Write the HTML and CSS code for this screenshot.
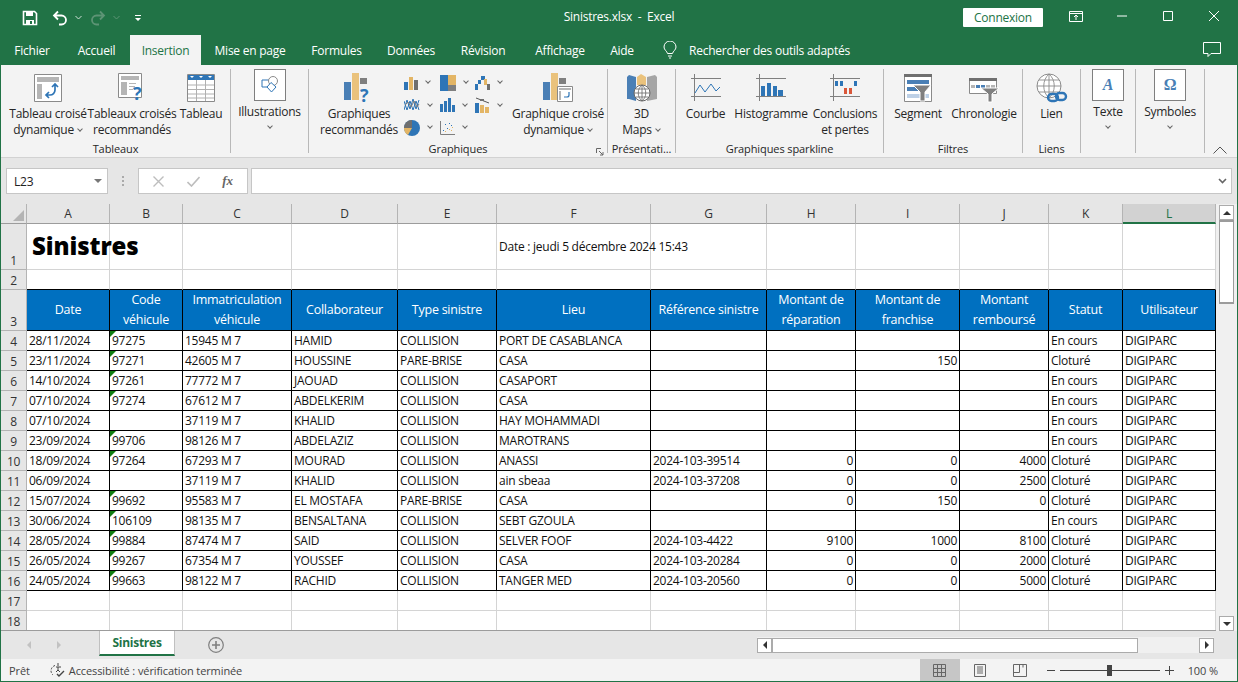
FILE: index.html
```html
<!DOCTYPE html>
<html lang="fr">
  <head>
    <meta charset="UTF-8" />
    <title>Sinistres.xlsx - Excel</title>
    <link rel="stylesheet" href="styles.css">
  </head>

  <body>
    <div class="window">
      <!-- barre de titre -->
      <div class="titlebar">
        <div class="qat">
          <svg class="q-save" width="16" height="16" viewBox="0 0 16 16"><path d="M1.5 1.5h11l2 2v11h-13z" fill="none" stroke="#fff" stroke-width="1.6"/><path d="M4 1.5h7v4.5H4zM4 10h8v5H4z" fill="#fff"/><path d="M8 11h2v3H8z" fill="#217346"/></svg>
          <svg class="q-undo" width="16" height="16" viewBox="0 0 16 16"><path d="M6 1.5 2 5.5l4 4M2.5 5.5h7a4 4 0 0 1 0 9H7" fill="none" stroke="#fff" stroke-width="1.8"/></svg>
          <svg class="q-chev" width="7" height="5" viewBox="0 0 7 5"><path d="M.5 1 3.5 4l3-3" fill="none" stroke="#cfe0d6"/></svg>
          <svg class="q-redo" width="16" height="16" viewBox="0 0 16 16"><path d="M10 1.5l4 4-4 4M13.5 5.5h-7a4 4 0 0 0 0 9H9" fill="none" stroke="#5d9475" stroke-width="1.8"/></svg>
          <svg class="q-chev2" width="7" height="5" viewBox="0 0 7 5"><path d="M.5 1 3.5 4l3-3" fill="none" stroke="#5d9475"/></svg>
          <svg class="q-more" width="8" height="8" viewBox="0 0 8 8"><path d="M1 1h6v1H1zM1 4h6L4 7z" fill="#fff"/></svg>
        </div>
        <div class="doc-title">Sinistres.xlsx&nbsp; - &nbsp;Excel</div>
        <div class="win-ctrl">
          <button class="connexion">Connexion</button>
          <svg class="w-ribbon" width="14" height="11" viewBox="0 0 14 11"><path d="M.5.5h13v10H.5zM.5 2.5h13M7 9V4M5 6l2-2 2 2" fill="none" stroke="#fff"/></svg>
          <svg class="w-min" width="10" height="10" viewBox="0 0 10 10"><path d="M0 5h10" stroke="#fff"/></svg>
          <svg class="w-max" width="10" height="10" viewBox="0 0 10 10"><path d="M.5.5h9v9h-9z" fill="none" stroke="#fff"/></svg>
          <svg class="w-close" width="10" height="10" viewBox="0 0 10 10"><path d="M0 0l10 10M10 0 0 10" stroke="#fff"/></svg>
        </div>
      </div>

      <!-- onglets -->
      <div class="tabs">
        <a class="tab t-fichier">Fichier</a>
        <a class="tab t-accueil">Accueil</a>
        <a class="tab t-insertion active">Insertion</a>
        <a class="tab t-mise">Mise en page</a>
        <a class="tab t-formules">Formules</a>
        <a class="tab t-donnees">Données</a>
        <a class="tab t-revision">Révision</a>
        <a class="tab t-affichage">Affichage</a>
        <a class="tab t-aide">Aide</a>
        <svg class="bulb" width="14" height="18" viewBox="0 0 14 18"><path d="M4.5 12.5C4 10 1 9 1 6a6 6 0 0 1 12 0c0 3-3 4-3.500 6.500zM5 15h4M6 17h2" fill="none" stroke="#fff"/></svg>
        <span class="search">Rechercher des outils adaptés</span>
        <svg class="comment" width="18" height="16" viewBox="0 0 18 16"><path d="M.5.500h17v11H8l-3 3v-3H.5z" fill="none" stroke="#fff"/></svg>
      </div>

      <!-- ruban -->
      <div class="ribbon">
        <div class="group g-tableaux">
          <div class="items">
            <div class="btn w-pivot">
              <svg width="28" height="28" viewBox="0 0 28 28"><path d="M.5.5h27v27H.5z" fill="#fff" stroke="#8a8a8a"/><path d="M3 3h22v5H3zM3 10h5v15H3z" fill="#b5b5b5"/><path d="M21 10v6a5 5 0 0 1-5 5h-4M18 13l3-3 3 3M15 18l-3 3 3 3" fill="none" stroke="#2e75b6" stroke-width="1.700"/></svg>
              <span>Tableau croisé</span><span>dynamique <i class="ch"></i></span>
            </div>
            <div class="btn w-reco">
              <svg width="28" height="30" viewBox="0 0 28 30"><path d="M.5.5h23v24H.5z" fill="#fff" stroke="#8a8a8a"/><path d="M3 3h18v4H3zM3 9h6v13H3zM11 10h7v1h-7zM11 13h6v1h-6zM11 16h4v1h-4z" fill="#b5b5b5"/><text x="15" y="27" class="qm">?</text></svg>
              <span>Tableaux croisés</span><span>recommandés</span>
            </div>
            <div class="btn w-table">
              <svg width="28" height="28" viewBox="0 0 28 28"><path d="M.5.5h27v27H.5z" fill="#fff" stroke="#8a8a8a"/><path d="M1 1h26v5H1z" fill="#2e75b6"/><path d="M1 11h26M1 15.500h26M1 20h26M1 24h26M9.500 6v21M18.500 6v21" stroke="#b0b0b0"/><path d="M3 2h4L5 4zM12 2h4l-2 2zM21 2h4l-2 2z" fill="#fff"/></svg>
              <span>Tableau</span>
            </div>
          </div>
          <div class="group-label">Tableaux</div>
        </div>

        <div class="group g-illus">
          <div class="items">
            <div class="btn boxed">
              <div class="box"><svg width="18" height="18" viewBox="0 0 18 18"><path d="M1 4h8v7H1z" fill="none" stroke="#2e75b6"/><circle cx="12" cy="5" r="4.500" fill="#fff" stroke="#8a8a8a"/><path d="M10 6.500 15 11l-4.500 5L6 11z" fill="#fff" stroke="#2e75b6"/></svg></div>
              <span>Illustrations</span><i class="ch alone"></i>
            </div>
          </div>
        </div>

        <div class="group g-graph">
          <div class="items">
            <div class="btn w-greco">
              <svg width="30" height="30" viewBox="0 0 30 30"><path d="M0 9h7v18H0z" fill="#4a7fb5"/><path d="M8 0h7v27H8z" fill="#eac27c"/><path d="M16 5h7v6h-7z" fill="#7f7f7f"/><text x="16" y="29" class="qm">?</text></svg>
              <span>Graphiques</span><span>recommandés</span>
            </div>
            <div class="mini-grid">
              <div class="mini"><svg width="14" height="14" viewBox="0 0 14 14"><path d="M0 6h4v8H0z" fill="#2e75b6"/><path d="M5 1h4v13H5z" fill="#e3b565"/><path d="M10 4h4v10h-4z" fill="#6f6f6f"/></svg><i class="ch"></i></div>
              <div class="mini"><svg width="16" height="16" viewBox="0 0 16 16"><path d="M0 0h8v10H0z" fill="#2e75b6"/><path d="M0 10h8v6H0z" fill="#2e75b6"/><path d="M8 0h8v10H8z" fill="#e3b565"/><path d="M8 10h8v6H8z" fill="#7f7f7f"/></svg><i class="ch"></i></div>
              <div class="mini"><svg width="15" height="15" viewBox="0 0 15 15"><path d="M0 9h3v6H0zM3 5h3v4H3z" fill="#2e75b6"/><path d="M6 1h4v4H6z" fill="#2e75b6"/><path d="M9 4h3v6H9z" fill="#e3b565"/><path d="M12 9h3v6h-3z" fill="#6f6f6f"/></svg><i class="ch"></i></div>
              <div class="mini"><svg width="16" height="14" viewBox="0 0 16 14"><path d="M0 12 3 2l3 9 3-10 3 10 3-9M0 3l3 9 3-9 3 9 3-9 3 9" fill="none" stroke="#2e75b6"/><path d="M1 7l3-3 3 5 3-6 3 6 2-3" fill="none" stroke="#7f7f7f"/></svg><i class="ch"></i></div>
              <div class="mini"><svg width="15" height="14" viewBox="0 0 15 14"><path d="M0 6h3v8H0zM4 3h3v11H4zM8 0h3v14H8zM12 7h3v7h-3z" fill="#2e75b6"/></svg><i class="ch"></i></div>
              <div class="mini"><svg width="15" height="16" viewBox="0 0 15 16"><path d="M0 6h4v10H0z" fill="#2e75b6"/><path d="M5 8h4v8H5z" fill="#e3b565"/><path d="M10 10h4v6h-4z" fill="#e3b565"/><path d="M1 1 14 6" stroke="#555"/><path d="M5 2h4v2H5z" fill="#6f6f6f"/></svg><i class="ch"></i></div>
              <div class="mini"><svg width="16" height="16" viewBox="0 0 16 16"><circle cx="8" cy="8" r="8" fill="#2e75b6"/><path d="M8 8V0A8 8 0 0 0 0 8z" fill="#6f6f6f"/><path d="M8 8H0a8 8 0 0 0 4 7z" fill="#e3b565"/></svg><i class="ch"></i></div>
              <div class="mini"><svg width="15" height="14" viewBox="0 0 15 14"><path d="M.5 0v13.500H15" fill="none" stroke="#7f7f7f"/><path d="M3 9h1v1H3zM5 3h1v1H5zM7 7h1v1H7zM11 4h1v1h-1zM9 2h1v1H9z" fill="#2e75b6"/><path d="M5 10h1v1H5zM9 8h1v1H9zM12 6h1v1h-1zM11 9h1v1h-1z" fill="#e3b565"/></svg><i class="ch"></i></div>
            </div>
            <div class="btn w-gcroise">
              <svg width="30" height="30" viewBox="0 0 30 30"><path d="M0 9h7v18H0z" fill="#4a7fb5"/><path d="M8 0h7v27H8z" fill="#eac27c"/><path d="M16 5h7v6h-7z" fill="#7f7f7f"/><path d="M14.500 13.500h15v15h-15z" fill="#fff" stroke="#8a8a8a"/><path d="M16 15h12v2H16zM16 18h2v9h-2z" fill="#b5b5b5"/><path d="M26 19v3a2 2 0 0 1-2 2h-3" fill="none" stroke="#2e75b6" stroke-width="1.200"/></svg>
              <span>Graphique croisé</span><span>dynamique <i class="ch"></i></span>
            </div>
          </div>
          <div class="group-label">Graphiques</div>
          <svg class="launcher" width="8" height="8" viewBox="0 0 8 8"><path d="M.5 5V.5H5M3 3l4 4M4 7h3V4" fill="none" stroke="#666"/></svg>
        </div>

        <div class="group g-pres">
          <div class="items">
            <div class="btn w-maps">
              <svg width="30" height="30" viewBox="0 0 30 30"><path d="M0 4l2-2 7 2v24l-7-2-2 0z" fill="#4a7fb5"/><path d="M10 4l4-3 5 3v8h-9z" fill="#eac27c"/><path d="M20 4l8-2 2 2v22l-10 2z" fill="#a5a5a5"/><circle cx="15" cy="20" r="8" fill="#fff" stroke="#666"/><path d="M7 20h16M15 12v16M9 16h12M9 24h12M15 12c-5 4-5 12 0 16M15 12c5 4 5 12 0 16" fill="none" stroke="#666" stroke-width=".8"/></svg>
              <span>3D</span><span>Maps <i class="ch"></i></span>
            </div>
          </div>
          <div class="group-label">Présentati...</div>
        </div>

        <div class="group g-spark">
          <div class="items">
            <div class="btn w-courbe">
              <svg width="30" height="28" viewBox="0 0 30 28"><path d="M0 4.500h30M0 22.500h30M3.500 0v27" stroke="#7f7f7f"/><path d="M4 19l5-8 5 7 6-8 5 7 4-4" fill="none" stroke="#2e75b6"/></svg>
              <span>Courbe</span>
            </div>
            <div class="btn w-histo">
              <svg width="30" height="28" viewBox="0 0 30 28"><path d="M0 4.500h30M0 22.500h30M3.500 0v27" stroke="#7f7f7f"/><path d="M5 12h4v10H5zM11 9h4v13h-4zM17 12h4v10h-4zM22 16h5v6h-5z" fill="#2e75b6"/></svg>
              <span>Histogramme</span>
            </div>
            <div class="btn w-concl">
              <svg width="30" height="28" viewBox="0 0 30 28"><path d="M0 4.500h30M0 22.500h30M3.500 0v27" stroke="#7f7f7f"/><path d="M5 7h3v5H5zM10 7h3v5h-3zM24 7h3v5h-3z" fill="#2e75b6"/><path d="M14 14h3v6h-3zM19 14h3v6h-3z" fill="#d9573a"/></svg>
              <span>Conclusions</span><span>et pertes</span>
            </div>
          </div>
          <div class="group-label">Graphiques sparkline</div>
        </div>

        <div class="group g-filtres">
          <div class="items">
            <div class="btn w-segment">
              <svg width="28" height="28" viewBox="0 0 28 28"><path d="M.5.5h27v27H.5z" fill="#fff" stroke="#8a8a8a"/><path d="M0 0h28v3H0z" fill="#6f6f6f"/><path d="M3 6h22v4H3z" fill="#4a7fb5"/><path d="M3 13h12v4H3z" fill="#4a7fb5"/><path d="M3 20h22v4H3z" fill="#bdd0e6"/><path d="M9 11h18l-6 7v9h-5v-9z" fill="#7f7f7f" stroke="#fff"/></svg>
              <span>Segment</span>
            </div>
            <div class="btn w-chrono">
              <svg width="30" height="28" viewBox="0 0 30 28"><path d="M.5 4.500h27v15H.5z" fill="#fff" stroke="#8a8a8a"/><path d="M0 4h28v3H0z" fill="#6f6f6f"/><path d="M2 11h4v3H2z" fill="#b5b5b5"/><path d="M7 11h4v3H7zM12 11h4v3h-4z" fill="#4a7fb5"/><path d="M17 11h4v3h-4zM22 11h4v3h-4z" fill="#b5b5b5"/><path d="M12 14h18l-7 6v8h-4v-8z" fill="#7f7f7f" stroke="#fff"/></svg>
              <span>Chronologie</span>
            </div>
          </div>
          <div class="group-label">Filtres</div>
        </div>

        <div class="group g-liens">
          <div class="items">
            <div class="btn w-lien">
              <svg width="32" height="30" viewBox="0 0 32 30"><circle cx="13" cy="13" r="12" fill="#fff" stroke="#8a8a8a"/><path d="M1 13h24M13 1v24M3 7h20M3 19h20M13 1c-7 6-7 18 0 24M13 1c7 6 7 18 0 24" fill="none" stroke="#8a8a8a" stroke-width=".9"/><rect x="12" y="21" width="10" height="7" rx="3.500" fill="none" stroke="#2e75b6" stroke-width="2.400"/><rect x="20" y="20" width="10" height="7" rx="3.500" fill="none" stroke="#2e75b6" stroke-width="2.400"/></svg>
              <span>Lien</span>
            </div>
          </div>
          <div class="group-label">Liens</div>
        </div>

        <div class="group g-texte">
          <div class="items">
            <div class="btn boxed">
              <div class="box"><span class="glyph-a">A</span></div>
              <span>Texte</span><i class="ch alone"></i>
            </div>
          </div>
        </div>

        <div class="group g-symb">
          <div class="items">
            <div class="btn boxed">
              <div class="box"><span class="glyph-o">Ω</span></div>
              <span>Symboles</span><i class="ch alone"></i>
            </div>
          </div>
        </div>

        <svg class="collapse" width="14" height="8" viewBox="0 0 14 8"><path d="M.5 7.500 7 1l6.500 6.500" fill="none" stroke="#555"/></svg>
      </div>

      <!-- barre de formule -->
      <div class="formula-bar">
        <div class="namebox">L23<i class="tri-down"></i></div>
        <div class="dots"></div>
        <div class="fx-btns">
          <svg width="11" height="11" viewBox="0 0 11 11"><path d="M.5.5l10 10M10.500.5l-10 10" stroke="#bdbdbd" stroke-width="1.400"/></svg>
          <svg width="13" height="11" viewBox="0 0 13 11"><path d="M.5 6l4 4 8-9" fill="none" stroke="#bdbdbd" stroke-width="1.600"/></svg>
          <span class="fx">fx</span>
        </div>
        <div class="fx-input"><svg width="9" height="6" viewBox="0 0 9 6"><path d="M1 1l3.500 3.500L8 1" fill="none" stroke="#666" stroke-width="1.600"/></svg></div>
      </div>

      <!-- feuille -->
      <div class="sheet-area">
        <div class="sheet">
          <table>
            <colgroup>
              <col class="c-h"><col class="c-a"><col class="c-b"><col class="c-c"><col class="c-d"><col class="c-e"><col class="c-f"><col class="c-g"><col class="c-i8"><col class="c-i"><col class="c-i8"><col class="c-k"><col class="c-l">
            </colgroup>
            <tr class="r-head">
              <th class="corner"><i></i></th><th>A</th><th>B</th><th>C</th><th>D</th><th>E</th><th>F</th><th>G</th><th>H</th><th>I</th><th>J</th><th>K</th><th class="sel">L</th>
            </tr>
            <tr class="r-title">
              <th>1</th><td class="title" colspan="1">Sinistres</td><td></td><td></td><td></td><td></td><td class="date">Date : jeudi 5 décembre 2024 15:43</td><td></td><td></td><td></td><td></td><td></td><td></td>
            </tr>
            <tr class="r-pre">
              <th>2</th><td></td><td></td><td></td><td></td><td></td><td></td><td></td><td></td><td></td><td></td><td></td><td></td>
            </tr>
            <tr class="r-cols">
              <th>3</th><td>Date</td><td>Code véhicule</td><td>Immatriculation véhicule</td><td>Collaborateur</td><td>Type sinistre</td><td>Lieu</td><td>Référence sinistre</td><td>Montant de réparation</td><td>Montant de franchise</td><td>Montant remboursé</td><td>Statut</td><td>Utilisateur</td>
            </tr>
            <tr class="row"><th>4</th><td>28/11/2024</td><td class="tri">97275</td><td>15945 M 7</td><td>HAMID</td><td>COLLISION</td><td>PORT DE CASABLANCA</td><td></td><td></td><td></td><td></td><td>En cours</td><td>DIGIPARC</td></tr>
            <tr class="row"><th>5</th><td>23/11/2024</td><td class="tri">97271</td><td>42605 M 7</td><td>HOUSSINE</td><td>PARE-BRISE</td><td>CASA</td><td></td><td></td><td class="n">150</td><td></td><td>Cloturé</td><td>DIGIPARC</td></tr>
            <tr class="row"><th>6</th><td>14/10/2024</td><td class="tri">97261</td><td>77772 M 7</td><td>JAOUAD</td><td>COLLISION</td><td>CASAPORT</td><td></td><td></td><td></td><td></td><td>En cours</td><td>DIGIPARC</td></tr>
            <tr class="row"><th>7</th><td>07/10/2024</td><td class="tri">97274</td><td>67612 M 7</td><td>ABDELKERIM</td><td>COLLISION</td><td>CASA</td><td></td><td></td><td></td><td></td><td>En cours</td><td>DIGIPARC</td></tr>
            <tr class="row"><th>8</th><td>07/10/2024</td><td></td><td>37119 M 7</td><td>KHALID</td><td>COLLISION</td><td>HAY MOHAMMADI</td><td></td><td></td><td></td><td></td><td>En cours</td><td>DIGIPARC</td></tr>
            <tr class="row"><th>9</th><td>23/09/2024</td><td class="tri">99706</td><td>98126 M 7</td><td>ABDELAZIZ</td><td>COLLISION</td><td>MAROTRANS</td><td></td><td></td><td></td><td></td><td>En cours</td><td>DIGIPARC</td></tr>
            <tr class="row"><th>10</th><td>18/09/2024</td><td class="tri">97264</td><td>67293 M 7</td><td>MOURAD</td><td>COLLISION</td><td>ANASSI</td><td>2024-103-39514</td><td class="n">0</td><td class="n">0</td><td class="n">4000</td><td>Cloturé</td><td>DIGIPARC</td></tr>
            <tr class="row"><th>11</th><td>06/09/2024</td><td></td><td>37119 M 7</td><td>KHALID</td><td>COLLISION</td><td>ain sbeaa</td><td>2024-103-37208</td><td class="n">0</td><td class="n">0</td><td class="n">2500</td><td>Cloturé</td><td>DIGIPARC</td></tr>
            <tr class="row"><th>12</th><td>15/07/2024</td><td class="tri">99692</td><td>95583 M 7</td><td>EL MOSTAFA</td><td>PARE-BRISE</td><td>CASA</td><td></td><td class="n">0</td><td class="n">150</td><td class="n">0</td><td>Cloturé</td><td>DIGIPARC</td></tr>
            <tr class="row"><th>13</th><td>30/06/2024</td><td class="tri">106109</td><td>98135 M 7</td><td>BENSALTANA</td><td>COLLISION</td><td>SEBT GZOULA</td><td></td><td></td><td></td><td></td><td>En cours</td><td>DIGIPARC</td></tr>
            <tr class="row"><th>14</th><td>28/05/2024</td><td class="tri">99884</td><td>87474 M 7</td><td>SAID</td><td>COLLISION</td><td>SELVER FOOF</td><td>2024-103-4422</td><td class="n">9100</td><td class="n">1000</td><td class="n">8100</td><td>Cloturé</td><td>DIGIPARC</td></tr>
            <tr class="row"><th>15</th><td>26/05/2024</td><td class="tri">99267</td><td>67354 M 7</td><td>YOUSSEF</td><td>COLLISION</td><td>CASA</td><td>2024-103-20284</td><td class="n">0</td><td class="n">0</td><td class="n">2000</td><td>Cloturé</td><td>DIGIPARC</td></tr>
            <tr class="row"><th>16</th><td>24/05/2024</td><td class="tri">99663</td><td>98122 M 7</td><td>RACHID</td><td>COLLISION</td><td>TANGER MED</td><td>2024-103-20560</td><td class="n">0</td><td class="n">0</td><td class="n">5000</td><td>Cloturé</td><td>DIGIPARC</td></tr>
            <tr class="blank"><th>17</th><td></td><td></td><td></td><td></td><td></td><td></td><td></td><td></td><td></td><td></td><td></td><td></td></tr>
            <tr class="blank"><th>18</th><td></td><td></td><td></td><td></td><td></td><td></td><td></td><td></td><td></td><td></td><td></td><td></td></tr>
            <tr class="blank"><th>19</th><td></td><td></td><td></td><td></td><td></td><td></td><td></td><td></td><td></td><td></td><td></td><td></td></tr>
          </table>
        </div>
        <div class="vscroll">
          <div class="sb-btn"><i class="arr-up"></i></div>
          <div class="sb-thumb"></div>
          <div class="sb-btn"><i class="arr-down"></i></div>
        </div>
      </div>

      <!-- onglet de feuille -->
      <div class="sheetbar">
        <i class="nav-l"></i><i class="nav-r"></i>
        <div class="sheet-tab">Sinistres</div>
        <svg class="plus" width="16" height="16" viewBox="0 0 16 16"><circle cx="8" cy="8" r="7.300" fill="none" stroke="#7f7f7f" stroke-width="1.200"/><path d="M8 4v8M4 8h8" stroke="#7f7f7f" stroke-width="1.600"/></svg>
        <div class="hscroll">
          <div class="hb"><i class="arr-left"></i></div>
          <div class="h-thumb"></div>
          <div class="hb"><i class="arr-right"></i></div>
        </div>
      </div>

      <!-- barre d'état -->
      <div class="statusbar">
        <span class="ready">Prêt</span>
        <svg class="a11y" width="16" height="14" viewBox="0 0 16 14"><path d="M5 2.500A5.500 5.500 0 0 0 3 12M1 6.500h.1" fill="none" stroke="#444" stroke-dasharray="2 1.500"/><path d="M8 0v3M6 4h5M8 4v3M6 9l2-2 2 2" fill="none" stroke="#444"/><path d="M7 11l2 2 5-5" fill="none" stroke="#444" stroke-width="1.400"/></svg>
        <span class="a11y-text">Accessibilité : vérification terminée</span>
        <div class="views">
          <div class="view on"><svg width="13" height="13" viewBox="0 0 13 13"><path d="M.5.5h12v12H.5zM.5 4.500h12M.5 8.500h12M4.500.5v12M8.500.5v12" fill="none" stroke="#666"/></svg></div>
          <div class="view"><svg width="12" height="13" viewBox="0 0 12 13"><path d="M.5.5h11v12H.5z" fill="none" stroke="#666"/><path d="M3 3h6M3 5h6M3 7h6M3 9h6" stroke="#666"/></svg></div>
          <div class="view"><svg width="14" height="13" viewBox="0 0 14 13"><path d="M.5.5h13v12H.5zM.5 8.500h6V.5M10 .5v3" fill="none" stroke="#666"/></svg></div>
        </div>
        <div class="zoom">
          <span class="z-min"></span>
          <div class="slider"><i></i></div>
          <span class="z-plus"></span>
          <span class="z-val">100 %</span>
        </div>
      </div>
    </div>
  </body>
</html>
```

FILE: styles.css
```css
* {
  margin: 0;
  padding: 0;
  box-sizing: border-box;
}

body {
  width: 1238px;
  height: 682px;
  overflow: hidden;
  font-family: "Open Sans", "Noto Sans", sans-serif;
  font-size: 12px;
  letter-spacing: -0.25px;
  color: #262626;
}

i {
  font-style: normal;
}

.window {
  display: flex;
  flex-direction: column;
  width: 1238px;
  height: 682px;
  background: #e6e6e6;
  border: 1px solid #217346;
  border-top: 0;
}

/* barre de titre */
.titlebar {
  display: grid;
  grid-template-columns: 1fr auto 1fr;
  align-items: center;
  height: 35px;
  background: #217346;
  color: #fff;
}

.qat {
  display: flex;
  align-items: center;
  height: 35px;
  padding-left: 21px;
}

.q-undo {
  margin-left: 14px;
}

.q-chev {
  margin-left: 7px;
}

.q-redo {
  margin-left: 8px;
}

.q-chev2 {
  margin-left: 7px;
}

.q-more {
  margin-left: 14px;
}

.doc-title {
  font-size: 12px;
  padding-bottom: 2px;
}

.win-ctrl {
  display: flex;
  align-items: center;
  justify-content: flex-end;
  padding-right: 18px;
}

.connexion {
  width: 80px;
  height: 19px;
  border: 0;
  border-radius: 1px;
  background: #fff;
  color: #217346;
  font: inherit;
  letter-spacing: inherit;
}

.w-ribbon {
  margin-left: 26px;
  margin-bottom: 3px;
}

.w-min {
  margin-left: 34px;
  margin-bottom: 3px;
}

.w-max {
  margin-left: 36px;
  margin-bottom: 3px;
}

.w-close {
  margin-left: 36px;
  margin-bottom: 3px;
}

/* onglets */
.tabs {
  display: flex;
  align-items: center;
  height: 30px;
  background: #217346;
  color: #fff;
}

.tab {
  display: flex;
  justify-content: center;
  align-items: center;
  height: 30px;
}

.t-fichier { width: 62px; }
.t-accueil { width: 67px; }
.t-insertion { width: 71px; }
.t-mise { width: 98px; }
.t-formules { width: 75px; }
.t-donnees { width: 74px; }
.t-revision { width: 70px; }
.t-affichage { width: 84px; }
.t-aide { width: 40px; }

.tab.active {
  background: #f3f3f3;
  color: #217346;
}

.bulb {
  margin-left: 21px;
}

.search {
  margin-left: 12px;
}

.comment {
  margin-left: auto;
  margin-right: 16px;
}

/* ruban */
.ribbon {
  position: relative;
  display: flex;
  height: 93px;
  padding-top: 4px;
  background: #f3f3f3;
  border-bottom: 1px solid #d2d2d2;
}

.group {
  position: relative;
  display: flex;
  flex-direction: column;
  height: 84px;
  border-right: 1px solid #b8b8b8;
}

.g-tableaux { width: 230px; }
.g-illus { width: 78px; }
.g-graph { width: 299px; }
.g-pres { width: 68px; }
.g-spark { width: 208px; }
.g-filtres { width: 139px; }
.g-liens { width: 58px; }
.g-texte { width: 55px; }
.g-symb { width: 69px; }

.items {
  display: flex;
  flex: 1;
  min-height: 0;
}

.group-label {
  height: 16px;
  margin-bottom: -4px;
  line-height: 16px;
  font-size: 11px;
  letter-spacing: -0.1px;
  text-align: center;
  white-space: nowrap;
}

.btn {
  display: flex;
  flex-direction: column;
  align-items: center;
  flex-shrink: 0;
  padding-top: 3px;
  line-height: 16px;
  white-space: nowrap;
}

.btn > svg {
  display: block;
  height: 32px;
  margin-bottom: 2px;
}

.qm {
  font: bold 18px "Open Sans", sans-serif;
  fill: #2e75b6;
}

.w-pivot { width: 78px; margin-left: 8px; }
.w-reco { width: 88px; margin-left: 1px; }
.w-table { width: 48px; margin-left: 1px; }
.w-greco { width: 80px; margin-left: 10px; }
.w-gcroise { width: 92px; margin-left: 0; }
.w-maps { width: 67px; }
.w-courbe { width: 53px; margin-left: 3px; }
.w-histo { width: 78px; }
.w-concl { width: 70px; }
.w-segment { width: 66px; margin-left: 1px; }
.w-chrono { width: 68px; margin-left: -1px; }
.w-lien { width: 57px; }

.boxed {
  width: 100%;
  padding-top: 0;
}

.box {
  display: flex;
  justify-content: center;
  align-items: center;
  width: 32px;
  height: 32px;
  margin-bottom: 3px;
  background: #fff;
  border: 1px solid #7f7f7f;
}

.glyph-a {
  font: italic bold 16px "Liberation Serif", serif;
  color: #4a7fb5;
}

.glyph-o {
  font: bold 16px "Liberation Serif", serif;
  color: #4a7fb5;
}

.ch {
  display: inline-block;
  width: 4px;
  height: 4px;
  margin: 0 1px 3px 1px;
  border-right: 1px solid #666;
  border-bottom: 1px solid #666;
  transform: rotate(45deg);
}

.ch.alone {
  margin-top: 4px;
}

.mini-grid {
  display: grid;
  grid-template-columns: 36px 35px 36px;
  grid-template-rows: 23px 22px 23px;
  width: 108px;
  margin-left: 5px;
  padding-top: 2px;
}

.mini {
  display: flex;
  align-items: center;
  gap: 7px;
}

.launcher {
  position: absolute;
  right: 3px;
  bottom: -3px;
}

.collapse {
  position: absolute;
  right: 10px;
  bottom: 3px;
}

/* barre de formule */
.formula-bar {
  display: flex;
  align-items: center;
  height: 46px;
  padding: 0 5px 0 5px;
}

.namebox {
  display: flex;
  align-items: center;
  justify-content: space-between;
  width: 102px;
  height: 26px;
  padding: 0 5px 0 7px;
  background: #fff;
  border: 1px solid #c6c6c6;
  color: #222;
}

.tri-down {
  border: 4px solid transparent;
  border-top: 4px solid #777;
  border-bottom: 0;
}

.dots {
  width: 2px;
  height: 10px;
  margin: 0 14px;
  border-left: 2px dotted #aaa;
}

.fx-btns {
  display: flex;
  align-items: center;
  justify-content: space-around;
  width: 110px;
  height: 26px;
  margin-right: 3px;
  padding: 0 3px;
  background: #fff;
  border: 1px solid #c6c6c6;
}

.fx {
  font: italic bold 13px "Liberation Serif", serif;
  color: #666;
}

.fx-input {
  display: flex;
  align-items: center;
  justify-content: flex-end;
  flex: 1;
  height: 26px;
  padding-right: 4px;
  background: #fff;
  border: 1px solid #c6c6c6;
}

/* feuille */
.sheet-area {
  display: flex;
  height: 427px;
}

.sheet {
  width: 1215px;
  height: 427px;
  overflow: hidden;
  border-bottom: 1px solid #9c9c9c;
  background: #fff;
}

table {
  table-layout: fixed;
  width: 1215px;
  border-collapse: separate;
  border-spacing: 0;
}

.c-h { width: 26px; }
.c-a { width: 83px; }
.c-b { width: 73px; }
.c-c { width: 109px; }
.c-d { width: 106px; }
.c-e { width: 99px; }
.c-f { width: 154px; }
.c-g { width: 116px; }
.c-i8 { width: 89px; }
.c-i { width: 104px; }
.c-k { width: 74px; }
.c-l { width: 93px; }

th {
  font-weight: 400;
  background: #e6e6e6;
  border-right: 1px solid #b4b4b4;
  border-bottom: 1px solid #b4b4b4;
  vertical-align: bottom;
  color: #333;
}

td {
  position: relative;
  padding: 0 2px;
  border-right: 1px solid #d4d4d4;
  border-bottom: 1px solid #d4d4d4;
  white-space: nowrap;
  color: #111;
}

tr {
  height: 20px;
}

.r-head th {
  height: 20px;
  vertical-align: middle;
  border-bottom: 1px solid #9c9c9c;
  border-right: 1px solid #b4b4b4;
}

.corner {
  position: relative;
}

.corner i {
  position: absolute;
  right: 2px;
  bottom: 2px;
  border-left: 11px solid transparent;
  border-bottom: 11px solid #b4b4b4;
}

.r-head th.sel {
  background: #d2d2d2;
  border-bottom: 2px solid #217346;
  color: #217346;
}

.r-title {
  height: 46px;
}

.title {
  font-size: 24px;
  font-weight: 800;
  letter-spacing: -0.1px;
  overflow: visible;
  padding: 0 0 2px 5px;
  color: #000;
}

.date {
  overflow: visible;
}

.r-pre td {
  border-bottom-color: #000;
}

.r-cols {
  height: 39px;
}

.r-cols td {
  padding: 0 1px;
  background: #0070c0;
  color: #fff;
  font-size: 12.500px;
  line-height: 20px;
  text-align: center;
  white-space: normal;
  border-right-color: #000;
  border-bottom-color: #000;
}

.row td {
  height: 20px;
  border-right-color: #000;
  border-bottom-color: #000;
  overflow: hidden;
}

.n {
  text-align: right;
}

.tri::before {
  content: "";
  position: absolute;
  left: 0;
  top: 0;
  border-top: 6px solid #107c10;
  border-right: 6px solid transparent;
}

/* barres de défilement */
.vscroll {
  display: flex;
  flex-direction: column;
  align-items: center;
  flex: 1;
  padding: 1px 0 0 0;
  background: #f0f0f0;
}

.sb-btn {
  display: flex;
  align-items: center;
  justify-content: center;
  flex-shrink: 0;
  width: 15px;
  height: 15px;
  background: #fff;
  border: 1px solid #ababab;
}

.sb-thumb {
  width: 15px;
  height: 84px;
  margin-bottom: auto;
  background: #fff;
  border: 1px solid #9c9c9c;
  border-width: 2px 1px;
}

.arr-up {
  border: 4px solid transparent;
  border-bottom: 4px solid #333;
  border-top: 0;
}

.arr-down {
  border: 4px solid transparent;
  border-top: 4px solid #333;
  border-bottom: 0;
}

.arr-left {
  border: 4px solid transparent;
  border-right: 4px solid #333;
  border-left: 0;
}

.arr-right {
  border: 4px solid transparent;
  border-left: 4px solid #333;
  border-right: 0;
}

/* onglet de feuille */
.sheetbar {
  display: flex;
  align-items: flex-start;
  height: 28px;
  background: #e6e6e6;
}

.nav-l {
  margin: 10px 0 0 26px;
  border: 4px solid transparent;
  border-right: 4px solid #c2c2c2;
  border-left: 0;
}

.nav-r {
  margin: 10px 0 0 26px;
  border: 4px solid transparent;
  border-left: 4px solid #c2c2c2;
  border-right: 0;
}

.sheet-tab {
  width: 76px;
  height: 25px;
  margin-left: 38px;
  margin-top: 0;
  background: #fff;
  border: 1px solid #c0c0c0;
  border-top: 0;
  border-bottom: 2px solid #217346;
  color: #217346;
  font-weight: 700;
  line-height: 24px;
  text-align: center;
}

.plus {
  margin: 6px 0 0 33px;
}

.hscroll {
  display: flex;
  align-items: center;
  width: 457px;
  height: 16px;
  margin: 6px 0 0 533px;
  background: #f0f0f0;
}

.hb {
  display: flex;
  justify-content: center;
  align-items: center;
  width: 15px;
  height: 15px;
  background: #fff;
  border: 1px solid #ababab;
}

.h-thumb {
  width: 366px;
  height: 15px;
  margin-right: auto;
  background: #fff;
  border: 1px solid #ababab;
}

/* barre d'état */
.statusbar {
  display: flex;
  align-items: center;
  flex: 1;
  background: #f3f3f3;
  font-size: 11px;
  letter-spacing: -0.1px;
  color: #444;
}

.ready {
  margin-left: 8px;
}

.a11y {
  margin-left: 20px;
}

.a11y-text {
  margin-left: 3px;
}

.views {
  display: flex;
  margin-left: auto;
}

.view {
  display: flex;
  justify-content: center;
  align-items: center;
  width: 40px;
  height: 22px;
}

.view.on {
  background: #c6c6c6;
}

.zoom {
  display: flex;
  align-items: center;
  margin-left: 7px;
  margin-right: 19px;
}

.z-min {
  width: 8px;
  height: 1px;
  background: #444;
}

.slider {
  position: relative;
  width: 100px;
  height: 1px;
  margin: 0 5px;
  background: #444;
}

.slider i {
  position: absolute;
  left: 47px;
  top: -5px;
  width: 5px;
  height: 11px;
  background: #444;
}

.z-plus {
  position: relative;
  width: 9px;
  height: 1px;
  background: #444;
}

.z-plus::after {
  content: "";
  position: absolute;
  left: 4px;
  top: -4px;
  width: 1px;
  height: 9px;
  background: #444;
}

.z-val {
  margin-left: 14px;
}
```
